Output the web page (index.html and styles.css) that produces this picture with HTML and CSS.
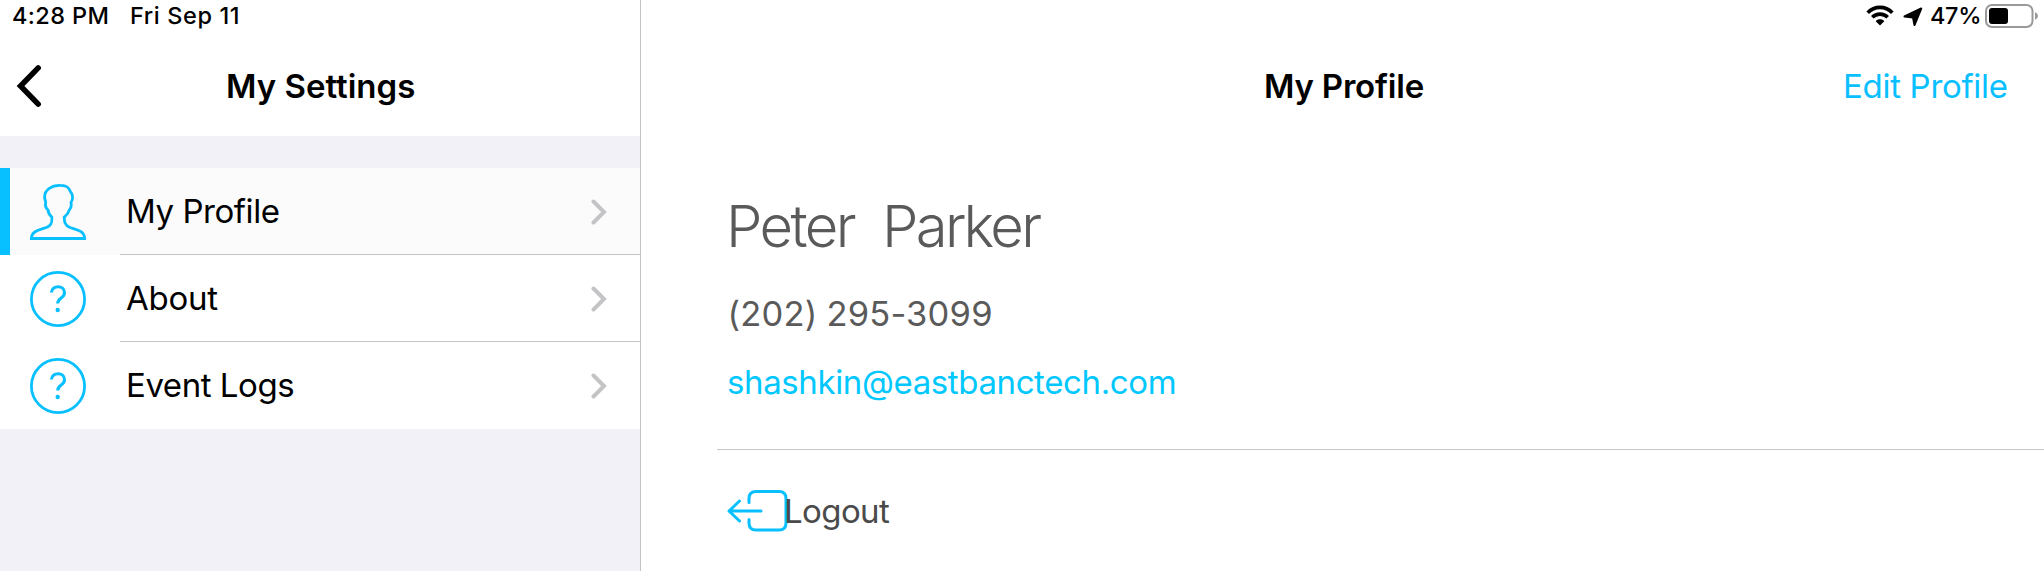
FILE: index.html
```html
<!DOCTYPE html>
<html lang="en">
<head>
<meta charset="utf-8">
<title>My Settings</title>
<link rel="stylesheet" href="styles.css">
</head>
<body>
<div class="app">
  <aside class="sidebar">
    <div class="status"><span class="time">4:28 PM</span><span class="date">Fri Sep 11</span></div>
    <header class="nav">
      <svg class="back" width="28" height="44" viewBox="0 0 28 44"><path d="M23.200 3.900 5.500 22 23.200 40.100" fill="none" stroke="#000" stroke-width="5.500" stroke-linecap="round" stroke-linejoin="miter"/></svg>
      <h1 class="title title-settings">My Settings</h1>
    </header>
    <nav class="menu">
      <a class="row active">
        <svg class="icon" width="56" height="56" viewBox="0 0 56 56"><path d="M30 1.400C22 1.200 14.600 5.500 14.600 13C14.600 15.500 15.700 17 15.700 18.500C15.200 21 16 24.500 18 26C18.500 30 20 31.500 21.800 33C22.200 37.500 22 41 17.500 43C12 45.500 1.400 46 1.400 54.500H54.600C54.600 46 44.500 45.500 39 43C34.500 41 34 37.500 34.300 33C36.500 31 38.500 29.500 39.300 26C41.300 24 41.600 21.500 41 18.500C42.600 16 42.800 12 41.700 9.500C40.500 8.500 40.300 7 39.300 5.500C37.800 2.300 34 1.400 30 1.400Z"/></svg>
        <span class="label l-profile">My Profile</span>
        <svg class="chev" width="16" height="26" viewBox="0 0 16 26"><path d="M2.500 2.500 13 13 2.500 23.500"/></svg>
      </a>
      <a class="row">
        <svg class="icon" width="56" height="56" viewBox="0 0 56 56"><circle cx="28" cy="28" r="26.600"/><path class="mark" d="M21.500 21.500C21.500 13.800 34.500 13.800 34.500 21.700C34.500 27.500 27.700 26.500 27.700 32.500"/><circle class="dot" cx="27.700" cy="39" r="2.200"/></svg>
        <span class="label l-about">About</span>
        <svg class="chev" width="16" height="26" viewBox="0 0 16 26"><path d="M2.500 2.500 13 13 2.500 23.500"/></svg>
      </a>
      <a class="row">
        <svg class="icon" width="56" height="56" viewBox="0 0 56 56"><circle cx="28" cy="28" r="26.600"/><path class="mark" d="M21.500 21.500C21.500 13.800 34.500 13.800 34.500 21.700C34.500 27.500 27.700 26.500 27.700 32.500"/><circle class="dot" cx="27.700" cy="39" r="2.200"/></svg>
        <span class="label l-logs">Event Logs</span>
        <svg class="chev" width="16" height="26" viewBox="0 0 16 26"><path d="M2.500 2.500 13 13 2.500 23.500"/></svg>
      </a>
    </nav>
  </aside>
  <main class="detail">
    <div class="status status-right">
      <svg width="28" height="22" viewBox="0 0 28 22" class="wifi"><path d="M1.700 7.700C8.500.6 19.500.6 26.300 7.700M6.300 12.300C10.600 8 17.400 8 21.700 12.300" fill="none" stroke="#000" stroke-width="3.600"/><path d="M9.700 16.200C12 13.700 16 13.700 18.300 16.200L14 20.600Z"/></svg>
      <svg width="20" height="20" viewBox="0 0 20 20" class="loc"><path d="M18.200 1.500 11.500 18 10 10.500 1.500 9.500Z" stroke="#000" stroke-width="2" stroke-linejoin="round"/></svg>
      <span class="pct">47%</span>
      <svg width="54" height="26" viewBox="0 0 54 26" class="batt"><rect x="1" y="2" width="46.500" height="22" rx="6" fill="none" stroke="#999" stroke-width="2"/><rect x="4" y="5" width="19" height="16" rx="3"/><path d="M50 9Q53 10.500 53 13T50 17Z" fill="#999"/></svg>
    </div>
    <header class="nav nav-detail">
      <h2 class="title title-profile">My Profile</h2>
      <a class="edit">Edit Profile</a>
    </header>
    <section class="info">
      <div class="name"><span class="first">Peter</span><span class="last">Parker</span></div>
      <div class="phone">(202) 295-3099</div>
      <a class="email">shashkin@eastbanctech.com</a>
    </section>
    <div class="logout">
      <svg width="62" height="44" viewBox="0 0 62 44"><path d="M22 13.500V9.500Q22 2.500 29 2.500H52Q59 2.500 59 9.500V34Q59 41 52 41H29Q22 41 22 34V30.500M34 22H2M12.500 12 2 22 12.500 32"/></svg>
      <span class="out">Logout</span>
    </div>
  </main>
</div>
</body>
</html>
```
FILE: styles.css
```css
* { box-sizing: border-box; }
body { margin: 0; font-family: Inter, "Liberation Sans", sans-serif; color: #000; background: #fff; }
.app { display: flex; width: 2044px; height: 571px; overflow: hidden; white-space: nowrap; }
.sidebar { width: 641px; height: 571px; border-right: 1px solid #c3c3c6; background: #f2f1f7; flex: none; }
.status { height: 32px; background: #fff; display: flex; font-size: 23.5px; line-height: 32px; padding-left: 12px; font-weight: 500; }
.time { width: 118px; letter-spacing: 0.4px; }
.date { letter-spacing: 0.6px; }
.nav { height: 104px; background: #fff; display: flex; align-items: flex-start; }
.back { margin: 32px 0 0 15px; flex: none; }
.title { margin: 34px 0 0; font-size: 33px; line-height: 40px; font-weight: 600; }
.title-settings { margin-left: 183px; }
.menu { margin-top: 32px; background: #fff; }
.row { display: flex; align-items: center; height: 87px; padding-left: 30px; background: linear-gradient(#c4c4c6, #c4c4c6) 120px 86px / 520px 1px no-repeat #fff; }
.row.active { background-color: #fbfbfb; border-left: 10px solid #08c0ff; padding-left: 20px; background-position: 110px 86px; }
.row:last-child { background: #fff; }
.icon { fill: none; stroke: #08c0ff; stroke-width: 2.800; flex: none; margin-top: 1px; }
.icon .dot { fill: #08c0ff; stroke: none; }
.icon .mark { stroke-linecap: butt; stroke-width: 3.100; }
.label { margin: -2px 0 0 40px; font-size: 33px; line-height: 40px; width: 464px; flex: none; letter-spacing: -0.45px; }
.l-about { letter-spacing: -0.25px; }
.chev { fill: none; stroke: #c4c4c6; stroke-width: 4; stroke-linecap: round; margin-left: 1px; }
.detail { flex: 1; background: #fff; }
.status-right { padding-left: 1225px; }
.status-right svg { flex: none; }
.wifi { margin-top: 5px; }
.loc { margin: 7px 8px 0 9px; }
.status-right .batt { margin: 3px 0 0 6px; }
.pct { width: 49px; margin-left: -1px; flex: none; letter-spacing: -0.3px; }
.title-profile { width: 579px; margin-left: 623px; letter-spacing: -0.2px; }
.info { height: 314px; margin-left: 76px; border-bottom: 1px solid #c8c8ca; padding-left: 10px; color: #5a5a5a; }
.name { display: flex; font-size: 58px; line-height: 70px; font-weight: 300; padding-top: 55px; letter-spacing: -2.6px; margin-left: -1px; }
.first { width: 156px; }
.last { letter-spacing: -2.7px; }
.phone { font-size: 34.500px; line-height: 42px; margin-top: 32px; letter-spacing: 0.2px; padding-left: 0.5px; word-spacing: -1px; }
.email { display: block; color: #00c8ff; font-size: 33px; line-height: 40px; margin-top: 27px; letter-spacing: -0.38px; }
.edit { font-size: 33px; line-height: 40px; margin-top: 34px; color: #08c0ff; letter-spacing: -0.3px; }
.logout { display: flex; padding: 39px 0 0 86px; }
.logout svg { fill: none; stroke: #08c0ff; stroke-width: 3; stroke-linecap: round; stroke-linejoin: round; flex: none; }
.out { font-size: 33px; line-height: 40px; margin: 2px 0 0 -5px; color: #4a4a4a; z-index: 1; letter-spacing: -0.6px; }
```
